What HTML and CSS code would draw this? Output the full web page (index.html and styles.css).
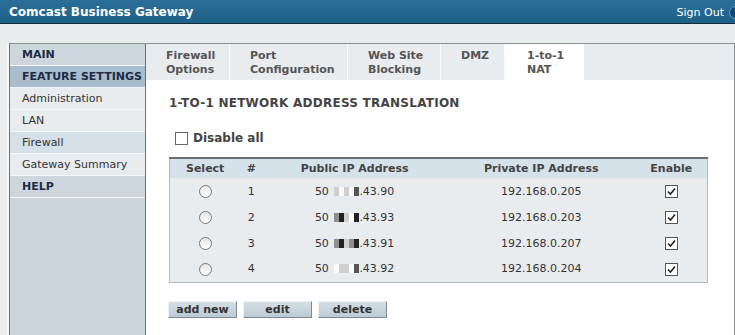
FILE: index.html
```html
<!DOCTYPE html>
<html lang="en">
<head>
    <meta charset="UTF-8">
    <title>Comcast Business Gateway - 1-to-1 NAT</title>
    <link rel="stylesheet" href="styles.css">
</head>
<body>

    <!-- Top bar -->
    <div class="topbar">
        <span class="brand">Comcast Business Gateway</span>
        <a class="signout" href="#">Sign Out <span class="signout-icon"></span></a>
    </div>

    <div class="page">
        <div class="frame">

            <!-- Left navigation -->
            <ul class="sidenav">
                <li class="nav-head">MAIN</li>
                <li class="nav-head nav-open">FEATURE SETTINGS</li>
                <li class="nav-item">Administration</li>
                <li class="nav-item">LAN</li>
                <li class="nav-item nav-current">Firewall</li>
                <li class="nav-item">Gateway Summary</li>
                <li class="nav-head">HELP</li>
            </ul>

            <div class="content">
                <!-- Firewall tabs -->
                <div class="tabs">
                    <div class="tab tab-fw">Firewall<br>Options</div>
                    <div class="tab tab-port">Port<br>Configuration</div>
                    <div class="tab tab-web">Web Site<br>Blocking</div>
                    <div class="tab tab-dmz">DMZ</div>
                    <div class="tab tab-nat active">1-to-1<br>NAT</div>
                    <div class="tab-rest"></div>
                </div>

                <div class="panel">
                    <h2 class="panel-title">1-TO-1 NETWORK ADDRESS TRANSLATION</h2>

                    <label class="disable-all"><span class="box"></span>Disable all</label>

                    <table class="nat-table">
                        <thead>
                            <tr>
                                <th class="col-select">Select</th>
                                <th class="col-num">#</th>
                                <th class="col-public">Public IP Address</th>
                                <th class="col-private">Private IP Address</th>
                                <th class="col-enable">Enable</th>
                            </tr>
                        </thead>
                        <tbody>
                            <tr>
                                <td><span class="radio"></span></td>
                                <td>1</td>
                                <td>50 <span class="mask"><i class="m1"></i><i class="m0"></i><i class="m1"></i><i class="m0"></i><i class="m3"></i></span>.43.90</td>
                                <td>192.168.0.205</td>
                                <td><span class="check"><svg viewBox="0 0 11 11"><polyline points="2,5.5 4.5,8 9,2.5"/></svg></span></td>
                            </tr>
                            <tr>
                                <td><span class="radio"></span></td>
                                <td>2</td>
                                <td>50 <span class="mask"><i class="m2"></i><i class="m4"></i><i class="m1"></i><i class="m0"></i><i class="m4"></i></span>.43.93</td>
                                <td>192.168.0.203</td>
                                <td><span class="check"><svg viewBox="0 0 11 11"><polyline points="2,5.5 4.5,8 9,2.5"/></svg></span></td>
                            </tr>
                            <tr>
                                <td><span class="radio"></span></td>
                                <td>3</td>
                                <td>50 <span class="mask"><i class="m2"></i><i class="m4"></i><i class="m1"></i><i class="m2"></i><i class="m4"></i></span>.43.91</td>
                                <td>192.168.0.207</td>
                                <td><span class="check"><svg viewBox="0 0 11 11"><polyline points="2,5.5 4.5,8 9,2.5"/></svg></span></td>
                            </tr>
                            <tr>
                                <td><span class="radio"></span></td>
                                <td>4</td>
                                <td>50 <span class="mask"><i class="m0"></i><i class="m1"></i><i class="m1"></i><i class="m0"></i><i class="m3"></i></span>.43.92</td>
                                <td>192.168.0.204</td>
                                <td><span class="check"><svg viewBox="0 0 11 11"><polyline points="2,5.5 4.5,8 9,2.5"/></svg></span></td>
                            </tr>
                        </tbody>
                    </table>

                    <div class="actions">
                        <button class="btn">add new</button>
                        <button class="btn">edit</button>
                        <button class="btn">delete</button>
                    </div>
                </div>
            </div>

        </div>
    </div>

</body>
</html>
```

FILE: styles.css
```css
* {
    margin: 0;
    padding: 0;
    box-sizing: border-box;
}

body {
    font-family: 'DejaVu Sans', Verdana, sans-serif;
    font-size: 11px;
    color: #333;
    background-color: #e9edee;
    height: 335px;
    overflow: hidden;
}

/* Top bar */
.topbar {
    height: 24px;
    display: flex;
    align-items: center;
    justify-content: space-between;
    padding-left: 9px;
    background: linear-gradient(#2b6f98, #1f6088);
    border-bottom: 1px solid #0b2b42;
    overflow: hidden;
}

.brand {
    color: #fff;
    font-weight: bold;
    font-size: 12px;
}

.signout {
    display: flex;
    align-items: center;
    gap: 5px;
    color: #fff;
    font-size: 11px;
    text-decoration: none;
    margin-right: -7px;
    padding-top: 2px;
}

.signout-icon {
    width: 13px;
    height: 13px;
    border-radius: 50%;
    background-color: #0e4a72;
    border: 1px solid #6c9cc0;
}

/* Page frame */
.page {
    padding: 19px 0 0 9px;
}

.frame {
    display: flex;
    height: 300px;
    border-top: 1px solid #8a8f93;
    border-left: 1px solid #6b7074;
    box-shadow: -4px 0 0 -2px #f7f8f9;
}

/* Left navigation */
.sidenav {
    list-style: none;
    width: 136px;
    background-color: #cad4db;
    border-right: 1px solid #6b7074;
}

.sidenav li {
    height: 22px;
    line-height: 22px;
    padding-left: 12px;
    border-bottom: 1px solid #f4f6f7;
    color: #333;
}

.nav-head {
    background-color: #cdd6dc;
    color: #1b2c48 !important;
    font-weight: bold;
}

.nav-open {
    background-color: #a9bccb;
}

.nav-item {
    background-color: #e8ecee;
}

.nav-current {
    background-color: #d5e0e8;
}

/* Content */
.content {
    flex: 1;
    background-color: #fff;
    border-right: 1px solid #8a8f93;
}

.tabs {
    display: flex;
    height: 36px;
    background-color: #e8ecee;
}

.tab {
    padding: 5px 0 0 20px;
    line-height: 14px;
    font-weight: bold;
    color: #555;
    border-right: 1px solid #fafbfb;
}

.tab-fw { width: 84px; }
.tab-port { width: 118px; }
.tab-web { width: 93px; }
.tab-dmz { width: 64px; }
.tab-nat { width: 79px; padding-left: 22px; }

.tab.active {
    background-color: #fff;
    border-right: none;
}

.tab-rest {
    flex: 1;
}

.panel {
    padding: 16px 0 0 23px;
}

.panel-title {
    font-size: 12px;
    line-height: 15px;
    letter-spacing: 0.25px;
    color: #444;
}

.disable-all {
    display: flex;
    align-items: center;
    gap: 5px;
    margin: 20px 0 0 6px;
    font-size: 12px;
    font-weight: bold;
    color: #444;
    line-height: 15px;
}

.box {
    width: 13px;
    height: 13px;
    border: 1px solid #666;
    background-color: #fff;
}

/* NAT table */
.nat-table {
    width: 539px;
    margin-top: 11px;
    border-collapse: collapse;
    border-top: 2px solid #6b6f72;
    border-left: 1px solid #b8bcbf;
    border-bottom: 1px solid #b8bcbf;
    border-right: 1px solid #b8bcbf;
    background-color: #e8ecee;
    color: #333;
}

.nat-table th {
    height: 20px;
    background-color: #d6e2ea;
    font-weight: bold;
    color: #444;
    text-align: center;
}

.nat-table td {
    height: 26px;
    text-align: center;
    vertical-align: middle;
}

.col-select { width: 71px; }
.col-num { width: 22px; }
.col-public { width: 185px; }
.col-private { width: 189px; }
.col-enable { width: 72px; }

.radio {
    display: inline-block;
    width: 13px;
    height: 13px;
    border-radius: 50%;
    border: 1px solid #777;
    background: linear-gradient(#e6e6e6, #fff);
    vertical-align: middle;
}

.check {
    display: inline-block;
    width: 13px;
    height: 13px;
    border: 1px solid #555;
    background-color: #fff;
    vertical-align: middle;
}

.check svg {
    display: block;
    width: 11px;
    height: 11px;
    fill: none;
    stroke: #222;
    stroke-width: 1.6;
}

/* Masked digits */
.mask {
    display: inline-flex;
    height: 9px;
    vertical-align: -1px;
    margin-left: 2px;
}

.mask i {
    width: 5px;
    height: 9px;
}

.m0 { background-color: #fafafa; }
.m1 { background-color: #cfcfcf; }
.m2 { background-color: #8f8f8f; }
.m3 { background-color: #555; }
.m4 { background-color: #222; }

/* Buttons */
.actions {
    display: flex;
    gap: 6px;
    margin: 18px 0 0 -1px;
}

.btn {
    width: 69px;
    height: 17px;
    font-family: 'DejaVu Sans', Verdana, sans-serif;
    font-size: 11px;
    font-weight: bold;
    color: #333;
    background: linear-gradient(#d5dee4, #bccbd5);
    border: 1px solid;
    border-color: #eef2f4 #7d8a93 #7d8a93 #eef2f4;
    cursor: pointer;
}
```
